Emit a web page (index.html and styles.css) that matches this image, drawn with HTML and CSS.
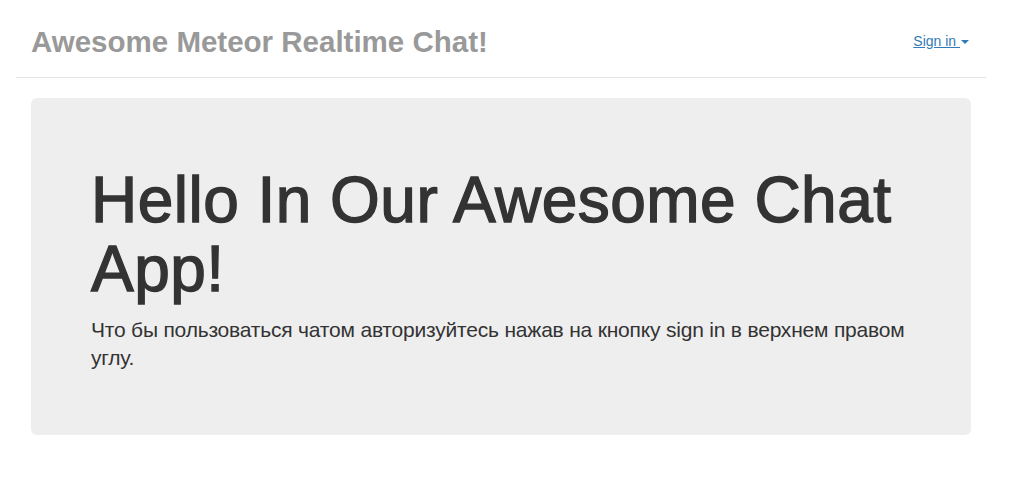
FILE: index.html
```html
<!DOCTYPE html>
<html lang="ru">
<head>
<meta charset="utf-8">
<title>Awesome Meteor Realtime Chat!</title>
<link rel="stylesheet" href="styles.css">
</head>
<body>
<div class="page">
  <header class="header">
    <h3 class="brand">Awesome Meteor Realtime Chat!</h3>
    <a class="signin" href="#">Sign in <span class="caret"></span></a>
  </header>
  <main class="content">
    <section class="jumbotron">
      <h1 class="jumbo-title">Hello In Our Awesome Chat App!</h1>
      <p class="jumbo-text">Что бы пользоваться чатом авторизуйтесь нажав на кнопку sign in в верхнем правом углу.</p>
    </section>
  </main>
</div>
</body>
</html>
```
FILE: styles.css
```css
html, body {
  margin: 0;
  padding: 0;
  background: #fff;
}
body {
  font-family: "Liberation Sans", Arial, sans-serif;
  font-size: 14px;
  line-height: 1.42857;
  color: #333;
}
.page {
  width: 970px;
  margin-left: 16px;
}
.header {
  display: flex;
  align-items: center;
  justify-content: space-between;
  height: 71px;
  padding: 6px 15px 0;
  border-bottom: 1px solid #e5e5e5;
  box-sizing: content-box;
}
.brand {
  margin: 0;
  font-size: 29.5px;
  font-weight: bold;
  color: #999;
  line-height: 40px;
}
.signin {
  color: #337ab7;
  text-decoration: underline;
  font-size: 14px;
  margin-right: 2px;
}
.caret {
  display: inline-block;
  width: 0;
  height: 0;
  margin-left: 1px;
  vertical-align: middle;
  border-top: 4px solid #337ab7;
  border-left: 4px solid transparent;
  border-right: 4px solid transparent;
}
.content {
  padding: 20px 15px 0;
}
.jumbotron {
  background: #eee;
  border-radius: 6px;
  padding: 48px 60px 48px;
}
.jumbo-title {
  margin: 20px 0 12px;
  font-size: 64px;
  font-weight: normal;
  line-height: 69px;
  letter-spacing: 0.48px;
  -webkit-text-stroke: 1.4px #333;
  color: #333;
}
.jumbo-text {
  margin: 0 0 15px;
  font-size: 21px;
  line-height: 28px;
  letter-spacing: -0.2px;
  color: #333;
}
```
